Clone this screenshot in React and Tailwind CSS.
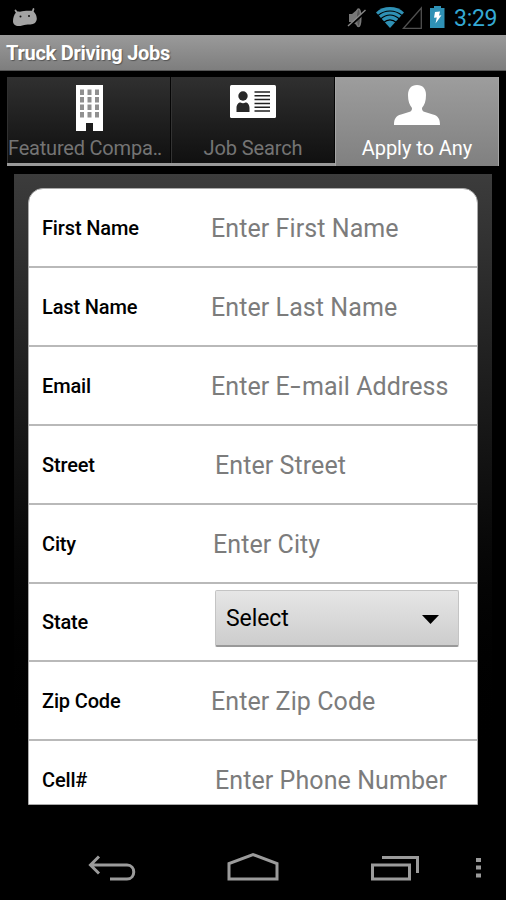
import React from 'react';

const fields = [
  { label: 'First Name', hint: 'Enter First Name', pad: 'pl-[169px]' },
  { label: 'Last Name', hint: 'Enter Last Name', pad: 'pl-[169px]' },
  {
    label: 'Email',
    hint: <>Enter E<span className="mx-[2.5px] inline-block scale-x-150">-</span>mail Address</>,
    pad: 'pl-[169px]',
  },
  { label: 'Street', hint: 'Enter Street', pad: 'pl-[173px]' },
  { label: 'City', hint: 'Enter City', pad: 'pl-[171px]' },
  { label: 'State', select: true },
  { label: 'Zip Code', hint: 'Enter Zip Code', pad: 'pl-[169px]' },
  { label: 'Cell#', hint: 'Enter Phone Number', pad: 'pl-[173px]' },
];

const StatusBar = () => (
  <div className="flex h-[35px] shrink-0 items-start justify-between bg-black">
    <svg className="ml-3 mt-[7px]" width="26" height="20" viewBox="0 0 26 20">
      <path d="M3.500 3.500 5.500 6.500M21.500 2 20.500 5" stroke="#a3a3a3" strokeWidth="1.800" strokeLinecap="round" />
      <path d="M4 5.500C5 4 6.500 4.500 8 4.800 12 3.500 16 3.500 20 3.800c3 1.200 4.800 4.700 4.800 8-.2 3.500-2.500 5.700-6.500 5.700-4 0-5 .3-8 1C5 20 1 18.500 1 14c0-3 1-6.500 3-8.500Z" fill="#a3a3a3" />
      <circle cx="8.500" cy="9.500" r="1" fill="#111" />
      <circle cx="17" cy="9" r="1" fill="#111" />
    </svg>
    <div className="flex">
      <svg className="mt-[5px]" width="108" height="25" viewBox="346 5 108 25">
        <path d="M349 14h3l6-5v17l-6-4h-3z" fill="#777" />
        <ellipse cx="358.500" cy="17.800" rx="2.300" ry="8.800" fill="#555" stroke="#777" strokeWidth="1.500" />
        <path d="M348.500 27.500 366.500 11" stroke="#000" strokeWidth="2" />
        <path d="M348 26 365.500 10" stroke="#888" strokeWidth="1.400" />
        <path d="M376 12.500C383 5.300 397 5.300 404 12.500L390 28Z" fill="#2f91b5" />
        <g fill="none" stroke="#000" strokeWidth="1.100">
          <path d="M378 15.500c7-6 17-6 24 0" />
          <path d="M380.500 19c6-5 13-5 19 0" />
          <path d="M383.500 22.500c4-3.300 9-3.300 13 0" />
        </g>
        <path d="M403.500 28.300 421.300 8v20.300Z" fill="none" stroke="#505050" strokeWidth="1.300" />
        <path d="M434 6h7v2h3.500v20H430V8h4Z" fill="#2f91b5" />
        <path d="m435 12 5-.500-1 4 2.500-.300-6 8.300 1.300-6-2.800.300Z" fill="#fff" />
      </svg>
      <div className="mr-[8px] mt-[5px] w-[44px] whitespace-nowrap text-[23px] leading-[27px] tracking-[-0.3px] text-[#35a9d3]">3:29</div>
    </div>
  </div>
);

const BuildingIcon = () => (
  <svg width="27" height="46" viewBox="0 0 27 46">
    <path d="M0 0h27v46h-10v-8h-7v8H0Z" fill="#fff" />
    {[4.5, 12, 19.5, 27].map((y) => (
      <path key={y} d={`M4 ${y}h4v5.500h-4zM11.500 ${y}h4v5.500h-4zM19 ${y}h4v5.500h-4z`} fill="#909090" />
    ))}
  </svg>
);

const ContactIcon = () => (
  <svg width="46" height="33" viewBox="0 0 46 33">
    <rect width="46" height="33" rx="1.500" fill="#fff" />
    <circle cx="13" cy="11" r="4.700" fill="#282828" />
    <path d="M6.500 27v-4c0-3.500 2-5.500 4-5.500 1.700 1 3.300 1 5 0 2 0 4 2 4 5.500v4Z" fill="#282828" />
    <path d="M24.500 7h15.500M24.500 10.800h15.500M24.500 14.600h15.500M24.500 18.400h15.500M24.500 22.200h15.500M24.500 26h15.500" stroke="#222" strokeWidth="1.500" />
  </svg>
);

const PersonIcon = () => (
  <svg width="46" height="41" viewBox="0 0 46 41">
    <path d="M23 0c6 0 9 4 9 10 0 6-1.500 10-4 13 0 2 .5 3.500 3 4l8 2.500c5 1.500 7 4 7 10.500H0c0-6.500 2-9 7-10.500l8-2.500c2.500-.500 3-2 3-4-2.500-3-4-7-4-13 0-6 3-10 9-10Z" fill="#fff" />
  </svg>
);

const Tabs = () => (
  <div className="mx-[7px] mt-[6px] flex h-[89px] shrink-0 border-b-[3px] border-[#999] text-[20px] leading-6">
    <div className="flex w-[164px] flex-col items-center border-l border-r border-l-[#303030] border-r-[#050505] bg-linear-to-b from-[#303030] to-[#101010] pt-2 text-[#747474]">
      <div className="h-[51px]"><BuildingIcon /></div>
      <div className="w-full whitespace-nowrap tracking-[-0.2px]">Featured Compa<span className="tracking-[-1px]">..</span></div>
    </div>
    <div className="flex w-[164px] flex-col items-center border-l border-r border-l-[#333] border-r-[#050505] bg-linear-to-b from-[#303030] to-[#101010] pt-2 text-[#747474]">
      <div className="h-[51px]"><ContactIcon /></div>
      <div className="tracking-[-0.1px]">Job Search</div>
    </div>
    <div className="-mb-[3px] flex flex-1 flex-col items-center border-x border-[#a5a5a5] bg-linear-to-b from-[#9d9d9d] to-[#808080] pt-2 text-white">
      <div className="h-[51px]"><PersonIcon /></div>
      <div className="tracking-[-0.05px]">Apply to Any</div>
    </div>
  </div>
);

const Select = () => (
  <div className="ml-[173px] mt-[6px] flex h-[57px] w-[244px] items-center justify-between rounded-[2px] border border-b-2 border-[#c4c4c4] border-b-[#999] bg-linear-to-b from-[#e6e6e6] to-[#cdcdcd] pl-[10px] pr-[19px] pt-[3px] text-[23px] tracking-[-0.1px] text-black">
    <span>Select</span>
    <svg width="17" height="9" viewBox="0 0 17 9">
      <path d="M0 0h17L8.500 9Z" fill="#000" />
    </svg>
  </div>
);

const Row = ({ field }) => (
  <div className="grid h-[78.8px] shrink-0 grid-cols-[1fr] border-b-2 border-[#b9b9b9] pl-[13px]">
    <div className="col-start-1 row-start-1 self-center pt-px whitespace-nowrap text-[20px] font-medium leading-6 tracking-[-0.15px] text-black">
      {field.label}
    </div>
    {field.select ? (
      <div className="col-start-1 row-start-1 self-start"><Select /></div>
    ) : (
      <div className={`col-start-1 row-start-1 self-center pt-[3px] whitespace-nowrap text-[25px] leading-[30px] tracking-[0.08px] text-[#7c7c7c] ${field.pad}`}>
        {field.hint}
      </div>
    )}
  </div>
);

const NavBar = () => (
  <div className="flex h-[64px] shrink-0 items-center bg-black">
    <svg width="506" height="64" viewBox="0 836 506 64" fill="none" stroke="#9b9b9b" strokeWidth="3">
      <path d="M90.500 865H127c9 0 9 14 0 14h-17M99 856.500 90.500 865l8.500 8.500" />
      <path d="M229 879v-15.500l24-9 24 9V879Z" />
      <path d="M372.500 865h37v14h-37zM382 857.500h35.500V873" />
      <path d="M476 858h5v4h-5zM476 865.500h5v4h-5zM476 873.500h5v4h-5z" fill="#9b9b9b" stroke="none" />
    </svg>
  </div>
);

const App = () => (
  <div className="flex h-[900px] w-[506px] flex-col overflow-hidden bg-black font-['Roboto',sans-serif]">
    <StatusBar />
    <div className="flex h-[36px] shrink-0 items-center border-b border-[#555] bg-linear-to-b from-[#9a9a9a] to-[#7e7e7e] pl-[6px] text-[20px] font-bold tracking-[-0.27px] text-white [text-shadow:1px_1px_1px_#555]">
      Truck Driving Jobs
    </div>
    <Tabs />
    <div className="mx-[14px] mt-[8px] h-[662px] shrink-0 bg-linear-to-b from-[#3c3c3c] to-black to-[90%] px-[14px] pt-[14px]">
      <div className="flex h-[617px] flex-col overflow-hidden rounded-t-[15px] border border-[#aaa] bg-white pt-[0.6px]">
        {fields.map((field) => (
          <Row key={field.label} field={field} />
        ))}
      </div>
    </div>
    <NavBar />
  </div>
);

export default App;
